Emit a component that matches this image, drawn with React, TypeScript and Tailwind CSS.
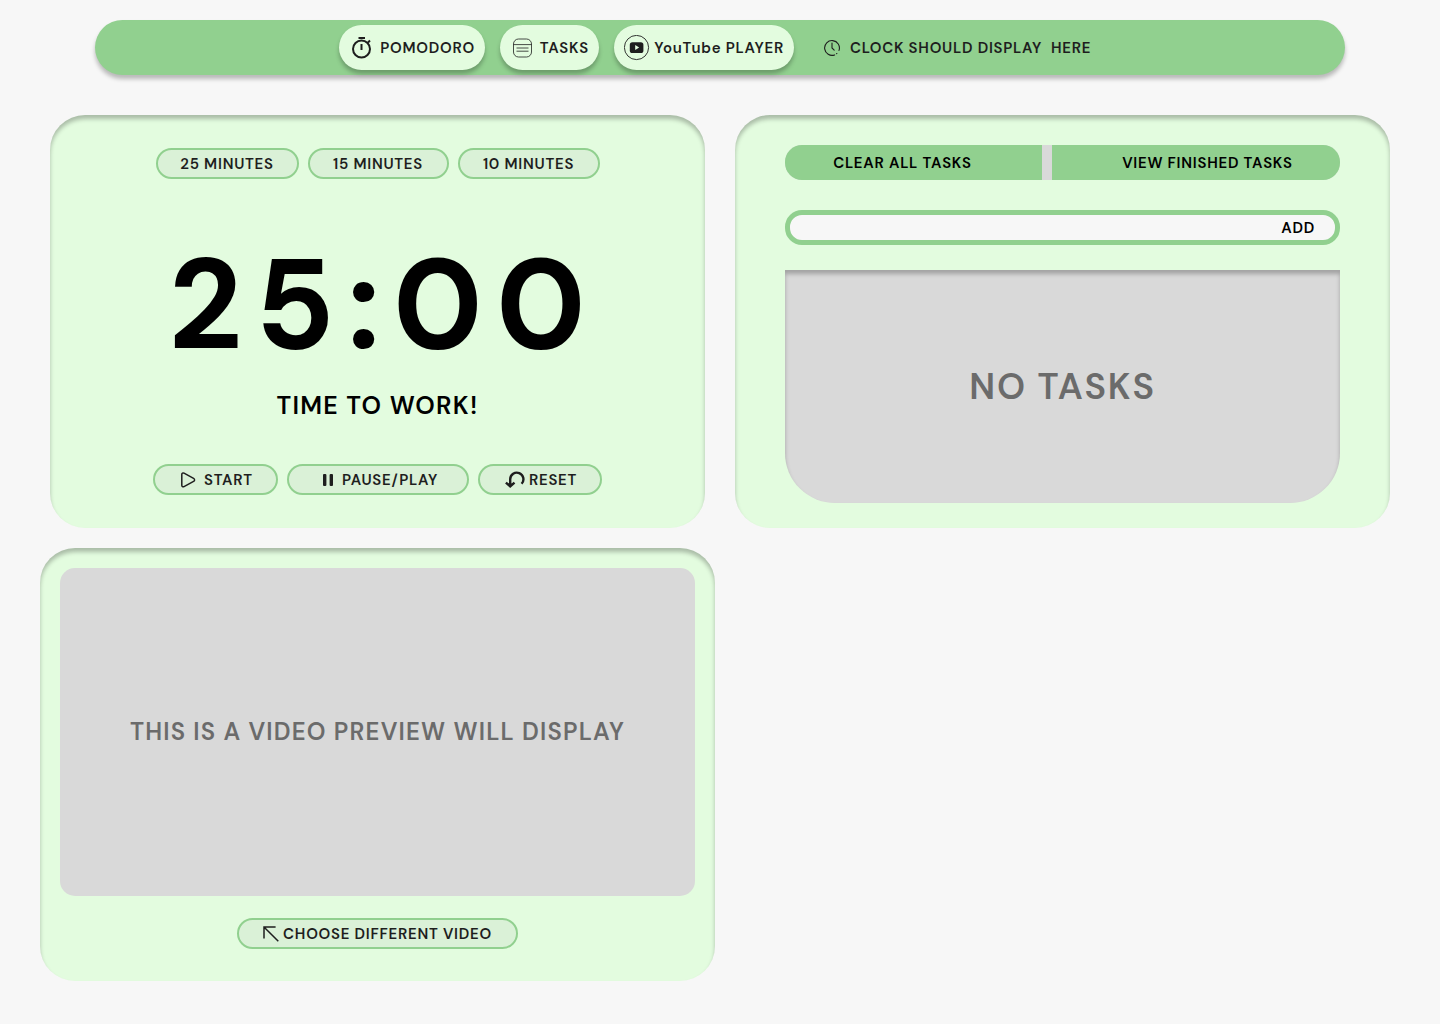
import type { ReactNode } from "react";

const insetShadow = "shadow-[inset_0_4px_4px_rgba(0,0,0,0.25)]";
const dropShadow = "shadow-[0_4px_4px_rgba(0,0,0,0.25)]";

function StopwatchIcon() {
  return (
    <svg width="24" height="24" viewBox="0 0 24 24" fill="none" stroke="currentColor" strokeWidth="2" aria-hidden="true">
      <circle cx="12.5" cy="13" r="8.5" />
      <path d="M9.5 2h6.5M12.5 8v6M19 6.500l2-2" />
    </svg>
  );
}

function TaskListIcon() {
  return (
    <svg width="24" height="20" viewBox="-2 0 24 20" fill="none" stroke="currentColor" strokeWidth="0.8" aria-hidden="true">
      <rect x="1.500" y="1" width="18" height="18" rx="5" />
      <path d="M1.500 6.600h18M4.500 10h12M4.500 13.200h12" />
    </svg>
  );
}

function PlayerIcon() {
  return (
    <svg width="26" height="26" viewBox="0 0 26 26" fill="none" aria-hidden="true">
      <circle cx="12.500" cy="12.500" r="12.100" stroke="currentColor" strokeWidth="0.9" />
      <rect x="5.800" y="7.200" width="13.600" height="10.800" rx="2.600" fill="currentColor" />
      <path d="M11.200 10.100v5l4-2.500z" fill="#e3fcdf" />
    </svg>
  );
}

function ClockIcon() {
  return (
    <svg width="16" height="16" viewBox="0 0 16 16" fill="none" stroke="currentColor" strokeWidth="1.100" strokeLinecap="round" aria-hidden="true">
      <path d="M10.600 14.900A7.400 7.400 0 1 1 15 10.400" />
      <path d="M12.600 13.700l.2-.2" />
      <path d="M8 3v5l2.200 2.200" />
    </svg>
  );
}

function PlayIcon() {
  return (
    <svg width="16" height="16" viewBox="0 0 16 16" fill="none" stroke="currentColor" strokeWidth="1.500" strokeLinejoin="round" aria-hidden="true">
      <path d="M1.800 2.600C1.800 1.200 2.800.6 4 1.200l9.600 5.200c1.300.7 1.300 2.300 0 3L4 14.600c-1.200.6-2.200 0-2.200-1.400z" />
    </svg>
  );
}

function PauseIcon() {
  return (
    <svg width="12" height="14" viewBox="0 0 12 14" fill="currentColor" aria-hidden="true">
      <rect x="1" y="1" width="3.400" height="12" rx="1" />
      <rect x="7.600" y="1" width="3.400" height="12" rx="1" />
    </svg>
  );
}

function ResetIcon() {
  return (
    <svg width="20" height="18" viewBox="0 0 20 18" fill="none" stroke="currentColor" strokeWidth="2.400" aria-hidden="true">
      <path d="M5.200 14V8.200A6.600 6.600 0 1 1 16.600 12.800" />
      <path d="M.9 11.600l4.300 3.800 4.300-3.800" />
      <path d="M1.600 12.400h7.200L5.200 16z" fill="currentColor" stroke="none" />
    </svg>
  );
}

function ArrowIcon() {
  return (
    <svg width="16" height="16" viewBox="0 0 16 16" fill="none" stroke="currentColor" strokeWidth="1.500" aria-hidden="true">
      <path d="M15.300 15.300L1.200 1.200M12.600 1H1v11.600" />
    </svg>
  );
}

function Pill({ width, children }: { width: string; children: ReactNode }) {
  return (
    <button
      type="button"
      className={`${width} flex h-[31px] items-center justify-center rounded-full border-2 border-[#91d08f] bg-[#daf1d7] text-[#1e1e1e]`}
    >
      {children}
    </button>
  );
}

function NavButton({ width, children }: { width: string; children: ReactNode }) {
  return (
    <button
      type="button"
      className={`${width} ${dropShadow} flex h-[45px] items-center justify-between rounded-full bg-[#e3fcdf] px-2.5`}
    >
      {children}
    </button>
  );
}

export default function App() {
  return (
    <div className="min-h-screen bg-[#f7f7f7] px-10 pt-5 pb-10 font-['DM_Sans',Inter,sans-serif] text-[15px] leading-5 font-semibold tracking-wider whitespace-nowrap text-black [font-optical-sizing:none]">
      <header className={`${dropShadow} mx-[55px] flex items-center justify-center gap-[15px] rounded-full bg-[#91d08f] py-[5px] text-[#1e1e1e]`}>
        <nav className="flex gap-[15px]">
          <NavButton width="w-[146px]">
            <StopwatchIcon />
            POMODORO
          </NavButton>
          <NavButton width="w-[99px]">
            <TaskListIcon />
            TASKS
          </NavButton>
          <NavButton width="w-[180px]">
            <PlayerIcon />
            YouTube PLAYER
          </NavButton>
        </nav>
        <div className="flex w-[292px] items-center gap-2.5 pl-[15px]">
          <ClockIcon />
          <span className="whitespace-pre">CLOCK SHOULD DISPLAY  HERE</span>
        </div>
      </header>

      <main className="mt-10 grid grid-cols-2 gap-x-2.5 gap-y-5">
        <section className={`${insetShadow} mx-2.5 flex flex-col items-center rounded-[35px] bg-[#e3fcdf] py-[33px]`}>
          <div className="flex gap-[9px]">
            <Pill width="w-[143px]">25 MINUTES</Pill>
            <Pill width="w-[141px]">15 MINUTES</Pill>
            <Pill width="w-[142px]">10 MINUTES</Pill>
          </div>
          <time className="mt-[62px] pl-3 text-[128px] leading-[128px] font-bold tracking-widest">25:00</time>
          <h1 className="mt-[21px] text-[25px] leading-8 tracking-wider">TIME TO WORK!</h1>
          <div className="mt-[42px] flex gap-[9px]">
            <Pill width="w-[125px]">
              <span className="flex items-center gap-2 pl-0.5"><PlayIcon />START</span>
            </Pill>
            <Pill width="w-[182px]">
              <span className="flex items-center gap-2 pl-1"><PauseIcon />PAUSE/PLAY</span>
            </Pill>
            <Pill width="w-[124px]">
              <span className="flex items-center gap-1 pl-0.5"><ResetIcon />RESET</span>
            </Pill>
          </div>
        </section>

        <section className={`${insetShadow} mx-2.5 flex flex-col rounded-[35px] bg-[#e3fcdf] px-[50px] pt-[30px] pb-[25px]`}>
          <div className="flex h-[35px] overflow-hidden rounded-[17px] bg-[#d9d9d9]">
            <button type="button" className="grow bg-[#91d08f] pr-[70px] pl-12">CLEAR ALL TASKS</button>
            <button type="button" className="ml-2.5 grow bg-[#91d08f] pr-[47px] pl-[70px]">VIEW FINISHED TASKS</button>
          </div>
          <form className="mt-[30px] flex h-[35px] rounded-[17px] border-[5px] border-[#91d08f] bg-[#f7f7f7]">
            <input aria-label="New task" className="min-w-0 grow rounded-l-full bg-transparent px-4 outline-none" />
            <button type="button" className="pr-5 pl-2">ADD</button>
          </form>
          <div className={`${insetShadow} mt-[25px] flex grow items-center justify-center rounded-b-[50px] bg-[#d9d9d9] text-4xl tracking-wider text-[#6b6b6b]`}>
            NO TASKS
          </div>
        </section>

        <section className={`${insetShadow} flex flex-col items-center rounded-[35px] bg-[#e3fcdf] px-5 pt-5 pb-8`}>
          <div className="flex h-[328px] w-full items-center justify-center rounded-[15px] bg-[#d9d9d9] text-2xl tracking-wider text-[#6b6b6b]">
            THIS IS A VIDEO PREVIEW WILL DISPLAY
          </div>
          <div className="mt-[22px]">
            <Pill width="w-[281px]">
              <span className="flex items-center gap-1"><ArrowIcon />CHOOSE DIFFERENT VIDEO</span>
            </Pill>
          </div>
        </section>
      </main>
    </div>
  );
}
